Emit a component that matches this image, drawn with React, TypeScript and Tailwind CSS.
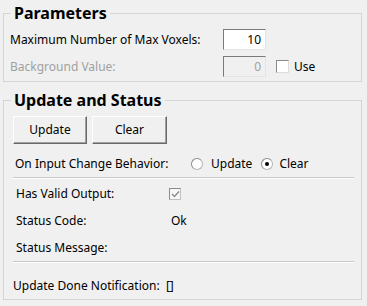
export default function App() {
  const font = { fontFamily: '"Noto Sans", "Open Sans", sans-serif' };
  return (
    <div
      className="w-[367px] h-[306px] bg-[#f0f0f0] text-[12px] text-black pl-[3px] pr-[5px] overflow-hidden"
      style={font}
    >
      {/* Parameters */}
      <fieldset className="mt-[3px] border border-[#d5d5d5] pl-[6px] pr-[6px] pb-[4px]">
        <legend className="ml-[1px] px-[3px] text-[16px] font-bold leading-5 h-5">Parameters</legend>
        <div className="mt-[6px] flex items-center h-[21px]">
          <span className="w-[213px] leading-none">Maximum Number of Max Voxels:</span>
          <div className="w-[43px] h-[21px] bg-white border border-t-[#7a7a7a] border-l-[#7a7a7a] border-r-[#e3e3e3] border-b-[#e3e3e3] flex items-center justify-end pr-[4px]">
            10
          </div>
        </div>
        <div className="mt-[6px] flex items-center h-[21px]">
          <span className="w-[213px] leading-none text-[#a0a0a0]">Background Value:</span>
          <div className="w-[43px] h-[21px] bg-[#f0f0f0] border border-t-[#7a7a7a] border-l-[#7a7a7a] border-r-[#e3e3e3] border-b-[#e3e3e3] flex items-center justify-end pr-[4px] text-[#a0a0a0]">
            0
          </div>
          <div className="ml-[10px] w-[13px] h-[13px] bg-white border border-t-[#8a8a8a] border-l-[#8a8a8a] border-r-[#dcdcdc] border-b-[#dcdcdc]" />
          <span className="ml-[5px] leading-none">Use</span>
        </div>
      </fieldset>

      {/* Update and Status */}
      <fieldset className="mt-[8px] border border-[#d5d5d5] pl-[9px] pr-[6px] h-[210px]">
        <legend className="-ml-[2px] px-[3px] text-[16px] font-bold leading-5 h-5">Update and Status</legend>
        <div className="mt-[6px] flex gap-[5px]">
          <button className="w-[74px] h-[28px] bg-[#f0f0f0] border border-t-white border-l-white border-r-[#696969] border-b-[#696969] shadow-[inset_-1px_-1px_0_#a0a0a0]">
            Update
          </button>
          <button className="w-[75px] h-[28px] bg-[#f0f0f0] border border-t-white border-l-white border-r-[#696969] border-b-[#696969] shadow-[inset_-1px_-1px_0_#a0a0a0]">
            Clear
          </button>
        </div>
        <div className="mt-[8px] h-6 flex items-center pl-[2px]">
          <span className="w-[176px]">On Input Change Behavior:</span>
          <span className="w-[12px] h-[12px] rounded-full bg-white border border-[#b5b5b5] border-t-[#8a8a8a] border-l-[#8a8a8a]" />
          <span className="ml-[8px]">Update</span>
          <span className="ml-[9px] w-[12px] h-[12px] rounded-full bg-white border border-[#b5b5b5] border-t-[#8a8a8a] border-l-[#8a8a8a] flex items-center justify-center">
            <span className="w-[4px] h-[4px] rounded-full bg-black" />
          </span>
          <span className="ml-[6px]">Clear</span>
        </div>
        <div className="mt-px h-[2px] w-[341px] border-t border-[#c8c8c8] border-b border-b-white" />
        <div className="h-[27px] mt-[1px] flex items-center pl-[3px]">
          <span className="w-[153px]">Has Valid Output:</span>
          <span className="w-[12px] h-[12px] bg-[#f7f7f7] border border-[#c0c0c0] border-t-[#8a8a8a] border-l-[#8a8a8a] flex items-center justify-center">
            <svg width="9" height="8" viewBox="0 0 9 8">
              <path d="M1 4 L3.5 6.5 L8 1.5" stroke="#8c8c8c" strokeWidth="1.4" fill="none" />
            </svg>
          </span>
        </div>
        <div className="h-[27px] flex items-center pl-[3px]">
          <span className="w-[155px]">Status Code:</span>
          <span>Ok</span>
        </div>
        <div className="h-[27px] flex items-center pl-[3px]">
          <span>Status Message:</span>
        </div>
        <div className="h-[2px] w-[341px] border-t border-[#c8c8c8] border-b border-b-white" />
        <div className="mt-[9px] h-[27px] flex items-center">
          <span>Update Done Notification:&nbsp; []</span>
        </div>
      </fieldset>
    </div>
  );
}
